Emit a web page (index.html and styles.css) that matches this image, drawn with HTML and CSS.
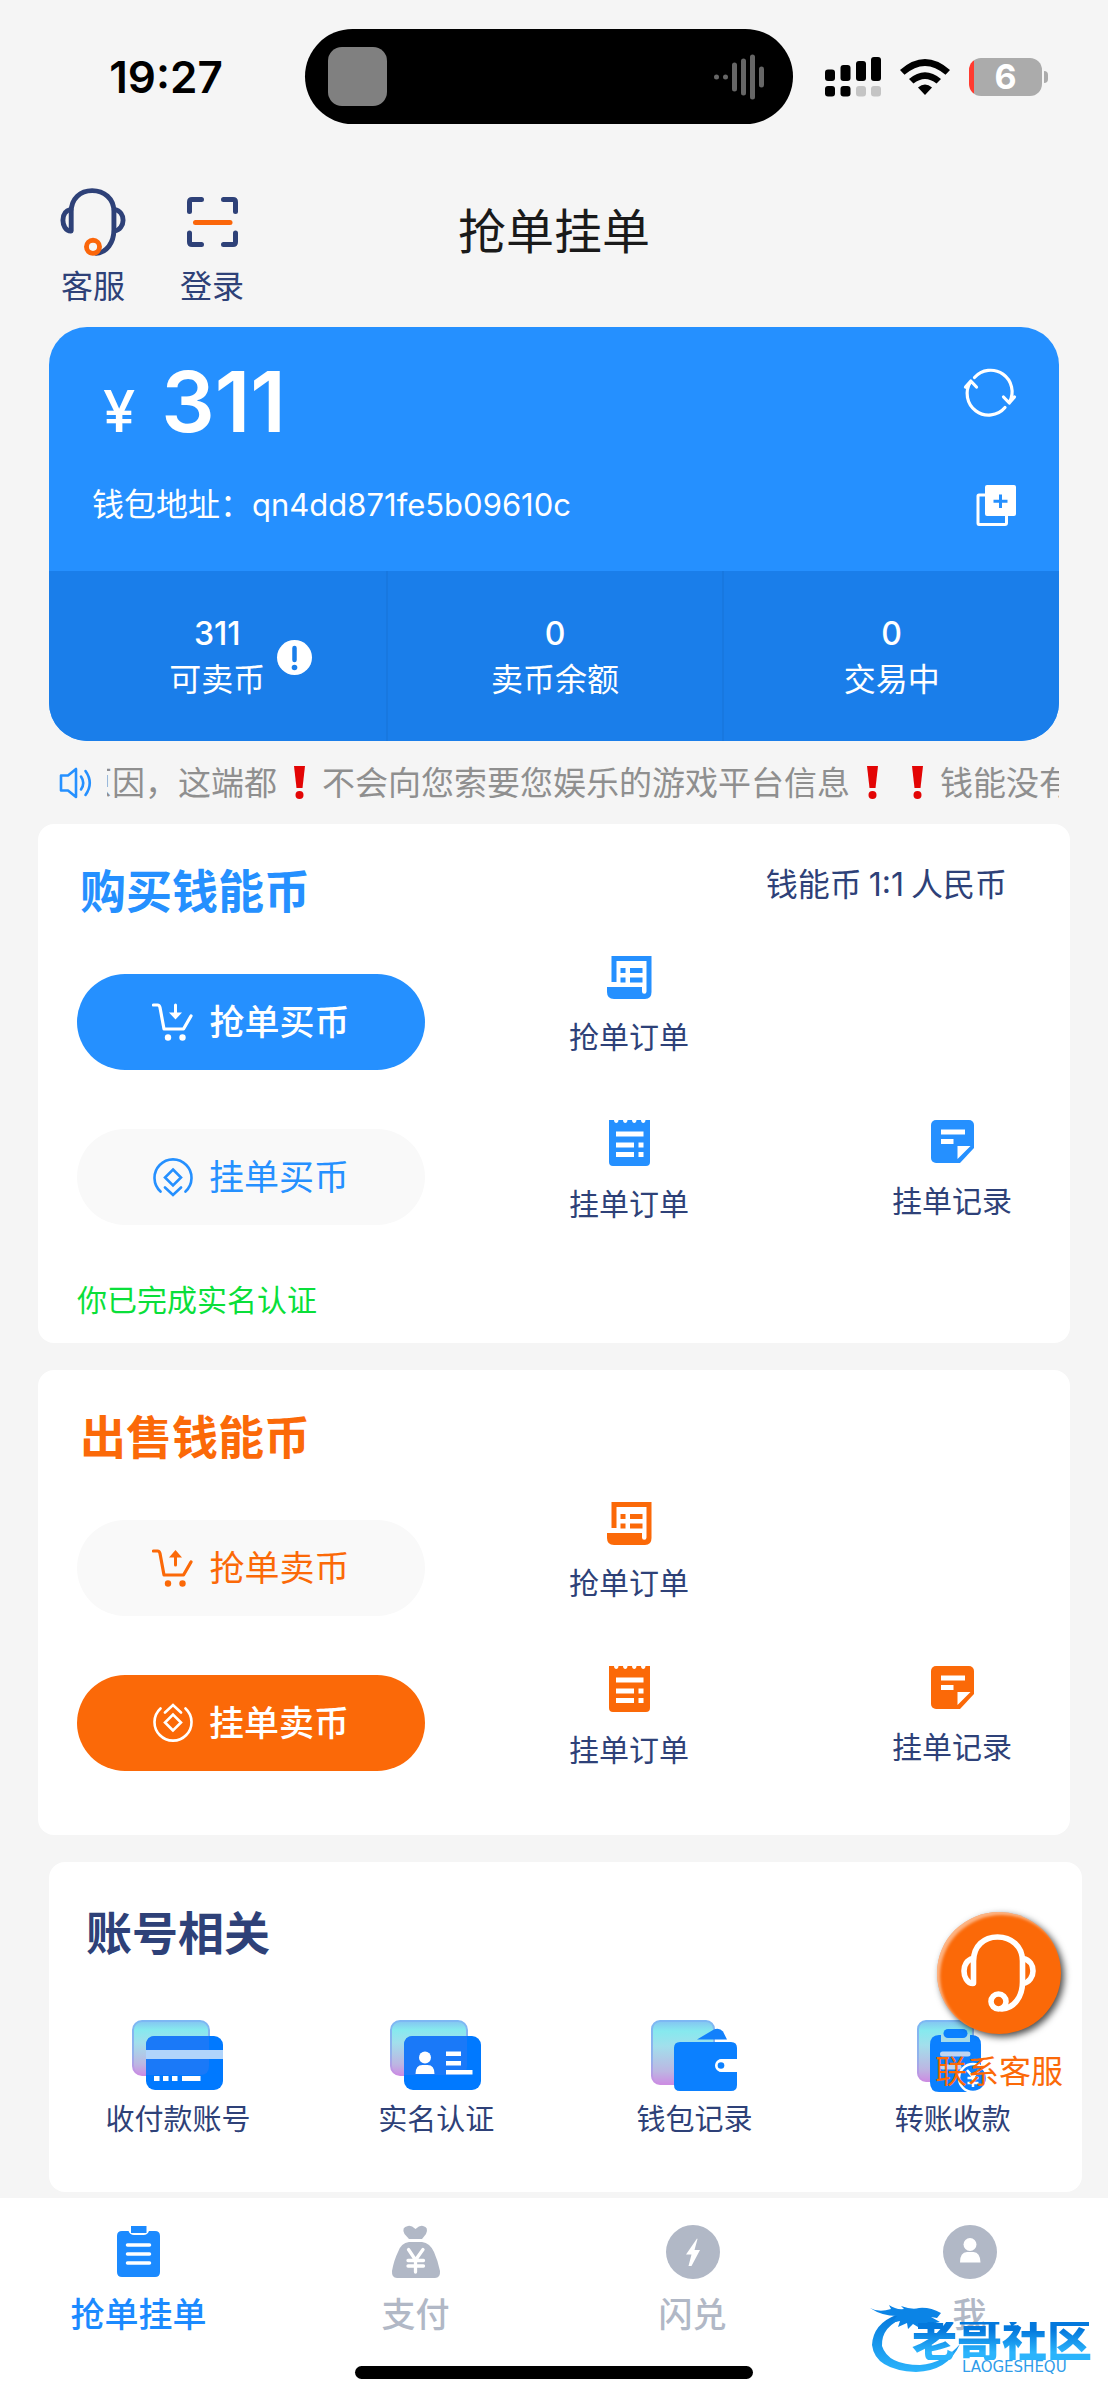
FILE: index.html
```html
<!DOCTYPE html>
<html lang="zh-CN">
<head>
<meta charset="utf-8">
<meta name="viewport" content="width=device-width, initial-scale=1">
<title>抢单挂单</title>
<link rel="stylesheet" href="styles.css">
</head>
<body>
<svg class="sprite" aria-hidden="true">
  <defs>
    <linearGradient id="glass" x1="0" y1="0" x2="0" y2="1">
      <stop offset="0" stop-color="#84c4f2"/>
      <stop offset=".16" stop-color="#86e9ee"/>
      <stop offset=".4" stop-color="#a2dfec"/>
      <stop offset=".8" stop-color="#bcb6e2"/>
      <stop offset="1" stop-color="#cc8ee2"/>
    </linearGradient>
    <linearGradient id="edge" x1="0" y1="0" x2="0" y2="1">
      <stop offset="0" stop-color="#7db8f3"/>
      <stop offset=".6" stop-color="#92b2ec"/>
      <stop offset="1" stop-color="#cc8ee2"/>
    </linearGradient>
    <linearGradient id="dragon" x1="0" y1="0" x2="0" y2="1">
      <stop offset="0" stop-color="#0478dc"/>
      <stop offset="1" stop-color="#2bb4fc"/>
    </linearGradient>
  </defs>
  <symbol id="i-headset" viewBox="0 0 75 78">
    <g fill="none" stroke="currentColor" stroke-width="5.6" stroke-linecap="round">
      <path d="M12.5 49V27C12.5 12 23 3 36.500 3S61.500 12 61.500 27V48C61.500 63 53 74 41 75"/>
      <path d="M12 24.500C5.500 26 3 31.500 3 37S6 49.500 12 49.500"/>
      <path d="M62 24.500c7 1.500 10 7 10 12.500s-3.500 11.500-10 12.500"/>
      <circle class="mic" cx="37.500" cy="67.500" r="7.500"/>
    </g>
  </symbol>
  <symbol id="i-order" viewBox="0 0 45 43">
    <path d="M4.500 0H44.500V36Q44.500 43 38 43H7Q0 43 0 36V31H35V35.500a2.200 2.200 0 0 0 4.500 0V5H9.500V26H4.500ZM13.500 12h5v5h-5zM23 12h12.500v5H23zM13.500 21.500h5v5h-5zM23 21.500h12.500v5H23z" fill="currentColor"/>
  </symbol>
  <symbol id="i-receipt" viewBox="0 0 41 46">
    <path d="M0 0H5C5 4 9.500 4 9.500 0H14C14 4 18.500 4 18.500 0H23C23 4 27.500 4 27.500 0H32C32 4 36.500 4 36.500 0H41V42q0 4-4 4H4q-4 0-4-4Z" fill="currentColor"/>
    <path d="M7 11.500h27.500v5H7zM7 22.500h18v5H7zM29.500 22.500h5v5h-5zM7 32h18v5H7zM29.500 32h5v5h-5z" fill="#fff"/>
  </symbol>
  <symbol id="i-note" viewBox="0 0 43 43">
    <path d="M5 0H38a5 5 0 0 1 5 5V28L29 43H5a5 5 0 0 1-5-5V5a5 5 0 0 1 5-5Z" fill="currentColor"/>
    <path d="M10 9.500h24v5H10zM10 19h12.500v5H10zM26.500 26H39.500L26.500 39z" fill="#fff"/>
  </symbol>
  <symbol id="i-cart" viewBox="0 0 41 38">
    <path d="M1.500 2H5.500Q7.500 2 8 4.500L12 26H31.500L39 13" fill="none" stroke="currentColor" stroke-width="3.200" stroke-linecap="round" stroke-linejoin="round"/>
    <circle cx="16" cy="34.500" r="3.200" fill="currentColor"/><circle cx="30.500" cy="34.500" r="3.200" fill="currentColor"/>
  </symbol>
  <symbol id="i-coin" viewBox="0 0 40 40">
    <g fill="none" stroke="currentColor" stroke-width="2.600" stroke-linecap="round">
      <path d="M7.500 34.500A18.500 18.500 0 1 1 32.500 34.500M12 30.500L20 38L28 30.500"/>
      <path d="M20 12.500L28 20.500L20 28.500L12 20.500Z"/>
    </g>
  </symbol>
</svg>

<div class="status">
  <span class="status-time">19:27</span>
  <div class="island">
    <span class="island-art"></span>
    <svg width="54" height="46" viewBox="0 0 54 46" stroke="#666" stroke-width="5" stroke-linecap="round"><path d="M2.500 23v.1M11.500 23v.1M20.500 11v24M29.500 7v32M38.500 3v40M47.500 15v16"/></svg>
  </div>
  <div class="status-icons">
    <svg width="56" height="40" viewBox="0 0 56 40"><g fill="#000"><rect y="12.500" width="10" height="11.500" rx="3"/><rect x="15.500" y="8" width="10" height="16" rx="3"/><rect x="31" y="4" width="10" height="20" rx="3"/><rect x="46" width="10" height="24" rx="3"/><rect y="29" width="10" height="10.500" rx="3"/><rect x="15.500" y="29" width="10" height="10.500" rx="3"/></g><g fill="#c4c4c4"><rect x="31" y="29" width="10" height="10.500" rx="3"/><rect x="46" y="29" width="10" height="10.500" rx="3"/></g></svg>
    <svg width="50" height="36" viewBox="0 0 50 36"><path d="M25 36L18 28.500Q25 22.500 32 28.500Z"/><path d="M9 20Q25 6.500 41 20L36.500 24.500Q25 15.500 13.500 24.500Z"/><path d="M0 11Q25-11 50 11L45.500 15.800Q25-2 4.500 15.800Z"/></svg>
    <span class="battery"><span class="battery-num">6</span></span>
  </div>
</div>

<header class="header">
  <nav class="tools">
    <a href="#service" class="tool"><svg class="headset-duo" width="66" height="68"><use href="#i-headset"/></svg>客服</a>
    <a href="#scan" class="tool"><span class="tool-pic"><svg width="51" height="50" viewBox="0 0 51 50" fill="none" stroke-width="5" stroke-linecap="round"><path stroke="currentColor" d="M2.500 14.500V5Q2.500 2.500 5 2.500H14.500M36.500 2.500H46Q48.500 2.500 48.500 5V14.500M48.500 36V45Q48.500 47.500 46 47.500H36.500M14.500 47.500H5Q2.500 47.500 2.500 45V36"/><path stroke="#fb660a" d="M8.500 25.500H43"/></svg></span>登录</a>
  </nav>
  <h1 class="title">抢单挂单</h1>
</header>

<main>
  <section class="wallet">
    <div class="wallet-top">
      <div class="wallet-line">
        <p class="amount"><span class="yen">¥</span>311</p>
        <button class="icon-btn" aria-label="刷新"><svg width="52" height="46" viewBox="0 0 52 46" fill="none" stroke="#fff" stroke-width="3.200" stroke-linecap="round" stroke-linejoin="round"><path d="M6.500 12A21.500 21.500 0 0 0 41 37.500M1.500 17L6.800 11L12.500 17M10.500 7.500A21.500 21.500 0 0 1 45.500 32M39.500 27L45.300 33L50.500 27"/></svg></button>
      </div>
      <div class="wallet-line">
        <p class="address">钱包地址：<span>qn4dd871fe5b09610c</span></p>
        <button class="icon-btn" aria-label="复制"><svg width="40" height="41" viewBox="0 0 40 41"><path d="M9 10H3Q2 10 2 11V38Q2 39.500 3 39.500H29Q30.500 39.500 30.500 38V31" fill="none" stroke="#fff" stroke-width="3"/><rect x="9" width="31" height="31" rx="2" fill="#fff"/><path d="M24.500 9.500V23M17.500 16.200H31.500" stroke="#2590ff" stroke-width="3"/></svg></button>
      </div>
    </div>
    <div class="stats">
      <div class="stat"><p><b>311</b>可卖币</p><svg width="35" height="35" viewBox="0 0 35 35"><circle cx="17.500" cy="17.500" r="17.500" fill="#fff"/><path d="M17.500 8V20" stroke="#1a7eea" stroke-width="4.500" stroke-linecap="round"/><circle cx="17.500" cy="27.500" r="2.800" fill="#1a7eea"/></svg></div>
      <div class="stat"><p><b>0</b>卖币余额</p></div>
      <div class="stat"><p><b>0</b>交易中</p></div>
    </div>
  </section>

  <div class="notice">
    <svg width="34" height="32" viewBox="0 0 34 32" fill="none" stroke="#2590ff" stroke-width="2.600" stroke-linejoin="round" stroke-linecap="round"><path d="M2 8.500H9L17 2V30L9 23.500H2ZM22 9.500Q26.500 16 22 22.500M26.500 4Q35 16 26.500 28"/></svg>
    <div class="marquee"><div class="marquee-track">原因，这端都<svg class="bang" viewBox="0 0 45 33"><path d="M17 0H28L25.500 22H19.500Z"/><circle cx="22.500" cy="29" r="4"/></svg>不会向您索要您娱乐的游戏平台信息<svg class="bang" viewBox="0 0 45 33"><path d="M17 0H28L25.500 22H19.500Z"/><circle cx="22.500" cy="29" r="4"/></svg><svg class="bang" viewBox="0 0 45 33"><path d="M17 0H28L25.500 22H19.500Z"/><circle cx="22.500" cy="29" r="4"/></svg>钱能没有</div></div>
  </div>

  <section class="card trade buy">
    <div class="card-head"><h2>购买钱能币</h2><span class="rate">钱能币<span>1:1</span>人民币</span></div>
    <div class="trade-body">
      <div class="pills">
        <button class="pill solid"><svg width="41" height="38" viewBox="0 0 41 38"><use href="#i-cart"/><path d="M23.500 2V10" stroke="currentColor" stroke-width="3" stroke-linecap="round"/><path d="M17 9.500H30L23.500 16.500Z" fill="currentColor"/></svg>抢单买币</button>
        <button class="pill"><svg width="40" height="40"><use href="#i-coin"/></svg>挂单买币</button>
      </div>
      <div class="links">
        <a href="#buy-orders" class="link"><svg width="45" height="43"><use href="#i-order"/></svg>抢单订单</a>
        <span></span>
        <a href="#buy-listings" class="link"><svg width="41" height="46"><use href="#i-receipt"/></svg>挂单订单</a>
        <a href="#buy-records" class="link"><svg width="43" height="43"><use href="#i-note"/></svg>挂单记录</a>
      </div>
    </div>
    <p class="verified">你已完成实名认证</p>
  </section>

  <section class="card trade sell">
    <div class="card-head"><h2>出售钱能币</h2></div>
    <div class="trade-body">
      <div class="pills">
        <button class="pill"><svg width="41" height="38" viewBox="0 0 41 38"><use href="#i-cart"/><path d="M23.500 8V16" stroke="currentColor" stroke-width="3" stroke-linecap="round"/><path d="M17 8.500H30L23.500 1Z" fill="currentColor"/></svg>抢单卖币</button>
        <button class="pill solid"><svg class="flip" width="40" height="40"><use href="#i-coin"/></svg>挂单卖币</button>
      </div>
      <div class="links">
        <a href="#sell-orders" class="link"><svg width="45" height="43"><use href="#i-order"/></svg>抢单订单</a>
        <span></span>
        <a href="#sell-listings" class="link"><svg width="41" height="46"><use href="#i-receipt"/></svg>挂单订单</a>
        <a href="#sell-records" class="link"><svg width="43" height="43"><use href="#i-note"/></svg>挂单记录</a>
      </div>
    </div>
  </section>

  <section class="card account">
    <h2>账号相关</h2>
    <nav class="account-grid">
      <a href="#payee"><svg width="92" height="72" viewBox="0 0 92 72"><rect x="1" y="1" width="76" height="54" rx="9" fill="url(#glass)" stroke="url(#edge)" stroke-width="2"/><rect x="14" y="16" width="77" height="54" rx="9" fill="#0079ff"/><path d="M14 25Q14 16 23 16H77V46Q77 55 68 55H14Z" fill="#1a79f8"/><path d="M14 30H91v9H14z" fill="#b0d4fb"/><path d="M22 56h5.500v5H22zM31 56h5.500v5H31zM40 56h5.500v5H40zM50 56h18.500v5H50z" fill="#fff"/></svg>收付款账号</a>
      <a href="#identity"><svg width="92" height="72" viewBox="0 0 92 72"><rect x="1" y="1" width="76" height="54" rx="9" fill="url(#glass)" stroke="url(#edge)" stroke-width="2"/><rect x="14" y="16" width="77" height="54" rx="9" fill="#0079ff"/><path d="M14 25Q14 16 23 16H77V46Q77 55 68 55H14Z" fill="#1a79f8"/><circle cx="35" cy="37.500" r="6" fill="#fff"/><path d="M25.500 54q0-9 7-9h5q7 0 7 9zM56 31.500h15v4.500H56zM56 41h15v4.500H56zM56 50h26.500v4.500H56z" fill="#fff"/></svg>实名认证</a>
      <a href="#wallet-log"><svg width="87" height="72" viewBox="0 0 87 72"><rect x="1" y="1" width="62" height="63" rx="8" fill="url(#glass)" stroke="url(#edge)" stroke-width="2"/><path d="M46 19.500L62 10Q68 7 72 11.500L76 19.500Z" fill="#1280fb"/><path d="M29 22H80Q86 22 86 28V39H71a6.300 6.300 0 0 0 0 13H86V65Q86 71 80 71H29Q23 71 23 65V28Q23 22 29 22Z" fill="#0b80ff"/><path d="M86 39H70.500a6.500 6.500 0 0 0 0 13H86z" fill="#fff"/><circle cx="70" cy="45.500" r="3.300" fill="#0b80ff"/></svg>钱包记录</a>
      <a href="#transfer"><svg width="71" height="72" viewBox="0 0 71 72"><rect x="1" y="1" width="55" height="60" rx="8" fill="url(#glass)" stroke="url(#edge)" stroke-width="2"/><path d="M13 25Q13 15 22 15H55Q64 15 64 25V62Q64 72 55 72H22Q13 72 13 62Z" fill="#0b80ff"/><path d="M24 14H53V22H24z" fill="#a6dcea"/><rect x="26.500" y="9" width="24" height="9" rx="4.500" fill="#0b80ff"/><path d="M25.500 34H51M25.500 47H42" stroke="#bfd5f2" stroke-width="5" stroke-linecap="round"/><circle cx="56" cy="58" r="14" fill="#0b80ff" stroke="#fff" stroke-width="2.500"/><path d="M50 50L56 57L62 50M56 57V67M50.500 58H61.500M50.500 63H61.500" fill="none" stroke="#fff" stroke-width="2.500"/></svg>转账收款</a>
    </nav>
  </section>
</main>

<footer class="dock">
  <nav class="tabs">
    <a href="#orders" class="tab active"><svg width="44" height="54" viewBox="0 0 44 54"><path d="M5 6H11.500Q13 10 17 10H26.500Q30.500 10 32 6H38Q43 6 43 11V47Q43 52 38 52H5Q0 52 0 47V11Q0 6 5 6Z" fill="currentColor"/><path d="M14 1H29.500V8H14z" fill="currentColor"/><path d="M10.500 20H32.500M10.500 29H32.500M10.500 38H32.500" stroke="#fff" stroke-width="3.500" stroke-linecap="round"/></svg>抢单挂单</a>
    <a href="#pay" class="tab"><svg width="48" height="54" viewBox="0 0 48 54"><path d="M16 1Q19 0 23.500 4Q28 0 31 1Q37 2 34 9L30 14H17L12.500 9Q9 2 16 1ZM17 17H30Q38 18 42 27Q46 36 48 46Q48.500 53 43 53H5Q-.5 53 0 46Q2 35 6 27Q9 18 17 17Z" fill="currentColor"/><path d="M16.500 24.500L23.500 35L31 24.500M23.500 35V47M16 35.500H31.500M16 41H31.500" fill="none" stroke="#fff" stroke-width="3.300" stroke-linecap="round"/></svg>支付</a>
    <a href="#swap" class="tab"><svg width="54" height="54" viewBox="0 0 54 54"><circle cx="27" cy="27" r="27" fill="currentColor"/><path d="M31 13.500L20 29.500H25.500L22.500 41H25.500L34 25H28.500L31.500 14Z" fill="#fff"/></svg>闪兑</a>
    <a href="#me" class="tab"><svg width="54" height="54" viewBox="0 0 54 54"><circle cx="27" cy="27" r="27" fill="currentColor"/><circle cx="27" cy="19.500" r="6.500" fill="#fff"/><path d="M17 37.500Q17 27 24 27H30.500Q37 27 37.500 37.500Z" fill="#fff"/></svg>我</a>
  </nav>
  <div class="home-bar"></div>
  <div class="brand">
    <svg width="92" height="76" viewBox="0 0 92 76"><path d="M26 17Q3 26 2 47Q5 72 46 74Q78 73 90 46Q74 65 50 67Q18 67 12 48Q11 28 36 19Z" fill="url(#dragon)"/><path d="M0 10Q9 15 21 11L19 7Q26 12 34 11L31 8Q42 12 49 10Q60 9 71 15L67 20L61 19L70 24Q63 26 57 25L48 29L43 26L38 31L37 25L28 29L30 23L21 25L27 18Q12 18 0 10Z" fill="#0b84e6"/></svg>
    <div class="brand-text"><strong>老哥社区</strong><small>LAOGESHEQU</small></div>
  </div>
</footer>

<a href="#service" class="float"><span class="float-disc"><svg width="75" height="78"><use href="#i-headset"/></svg></span>联系客服</a>
</body>
</html>
```
FILE: styles.css
```css
* { box-sizing: border-box; }
body, h1, h2, p { margin: 0; }
body {
  position: relative;
  background: #f5f5f5;
  color: #2e4178;
  font-family: Inter, "Noto Sans CJK SC", sans-serif;
  font-size: 30px;
  line-height: 40px;
}
a { color: inherit; text-decoration: none; }
button { border: 0; padding: 0; background: none; color: inherit; font: inherit; cursor: pointer; }
svg { display: block; flex: none; overflow: visible; }
.sprite { position: absolute; width: 0; height: 0; overflow: hidden; }

/* status bar */
.status {
  display: grid;
  grid-template-columns: 1fr 488px 1fr;
  align-items: center;
  padding: 29px 15px 28px 5px;
  color: #000;
}
.status-time { padding-left: 22px; text-align: center; font-size: 44px; font-weight: 600; line-height: 40px; }
.island {
  display: flex;
  align-items: center;
  justify-content: space-between;
  height: 95px;
  padding: 0 25px 0 23px;
  border-radius: 48px;
  background: #000;
}
.island-art { width: 59px; height: 59px; border-radius: 14px; background: #808080; }
.status-icons { display: flex; align-items: center; justify-content: flex-end; gap: 19px; padding-right: 51px; }
.battery {
  position: relative;
  width: 73px;
  height: 38px;
  border-radius: 12px;
  background: linear-gradient(90deg, #ff3b30 5px, #ababab 5px);
  color: #fff;
  text-align: center;
}
.battery::after {
  content: "";
  position: absolute;
  left: 75px;
  top: 13px;
  width: 4px;
  height: 12px;
  border-radius: 0 4px 4px 0;
  background: #ababab;
}
.battery-num { font-size: 34px; font-weight: 700; line-height: 38px; }

/* header */
.header {
  display: grid;
  grid-template-columns: 1fr auto 1fr;
  align-items: start;
  padding: 36px 49px 20px;
}
.tools { display: flex; gap: 54px; padding-left: 11px; }
.tool { display: flex; flex-direction: column; align-items: center; gap: 11px; font-size: 32px; }
.tool-pic { display: flex; align-items: center; height: 68px; }
.mic { stroke: var(--mic, currentColor); }
.headset-duo { --mic: #fb660a; }
.title { padding-top: 12px; color: #1a1a1a; font-size: 48px; font-weight: 400; line-height: 64px; }

/* wallet */
.wallet { margin: 0 49px; overflow: hidden; border-radius: 38px; background: #2590ff; color: #fff; }
.wallet-top { display: flex; flex-direction: column; gap: 51px; padding: 43px 43px 45px; }
.wallet-line { display: flex; align-items: flex-start; justify-content: space-between; }
.amount { display: flex; align-items: baseline; gap: 26px; padding-left: 11px; font-size: 84px; font-weight: 600; line-height: 64px; }
.yen { font-size: 58px; font-weight: 500; line-height: 40px; }
.address { font-size: 32px; }
.address span { font-size: 31px; }
.stats { display: grid; grid-template-columns: repeat(3, 1fr); background: #1a7eea; }
.stat {
  display: grid;
  grid-template-columns: 1fr auto 1fr;
  align-items: center;
  column-gap: 12px;
  height: 170px;
  padding-top: 2px;
  font-size: 32px;
  line-height: 46px;
  text-align: center;
}
.stat p { grid-column: 2; }
.stat + .stat { border-left: 2px solid #1878e0; }
.stat b { display: block; font-weight: 500; }

/* notice */
.notice { display: flex; align-items: center; gap: 14px; height: 83px; padding: 0 49px 0 59px; color: #8f8f8f; font-size: 33px; }
.marquee { flex: 1; overflow: hidden; }
.marquee-track { display: flex; align-items: center; margin-left: -28px; white-space: nowrap; }
.bang { width: 45px; height: 33px; fill: #e30505; }

/* cards */
.card { border-radius: 16px; background: #fff; }
.card h2 { font-size: 46px; font-weight: 700; line-height: 60px; }
.trade { margin: 0 38px 27px; padding: 37px 39px 64px; }
.card-head { display: flex; align-items: flex-start; justify-content: space-between; padding: 0 24px 0 3px; }
.rate { display: flex; gap: 7px; font-size: 32px; line-height: 48px; }
.buy { --accent: #2590ff; padding-bottom: 23px; }
.sell { --accent: #fb6908; }
.trade h2 { color: var(--accent); }
.trade-body { display: grid; grid-template-columns: 348px 1fr; gap: 144px; padding: 35px 19px 0 0; }
.pills { display: flex; flex-direction: column; gap: 59px; padding-top: 18px; }
.pill {
  display: flex;
  align-items: center;
  justify-content: center;
  gap: 16px;
  height: 96px;
  border-radius: 48px;
  background: #f9f9f9;
  color: var(--accent);
  font-size: 35px;
}
.solid { background: var(--accent); color: #fff; font-weight: 500; }
.flip { transform: rotate(180deg); }
.links { display: grid; grid-template-columns: auto auto; justify-content: space-between; align-content: start; row-gap: 63px; }
.link { display: flex; flex-direction: column; align-items: center; gap: 18px; color: #2e4178; }
.link svg { color: var(--accent); }
.verified { margin-top: 55px; color: #0adf3a; }

.account { margin: 0 26px 6px 49px; padding: 41px 0 52px; }
.account h2 { padding-left: 37px; }
.account-grid { display: grid; grid-template-columns: repeat(4, 1fr); padding-top: 57px; }
.account-grid a { display: flex; flex-direction: column; align-items: center; gap: 8px; font-size: 29px; }

/* bottom bar */
.dock { position: relative; padding: 27px 0 21px; background: #fff; }
.tabs { display: grid; grid-template-columns: repeat(4, 1fr); }
.tab { display: flex; flex-direction: column; align-items: center; gap: 16px; color: #b1b8c6; font-size: 34px; font-weight: 500; }
.active { color: #1b8aff; }
.home-bar { width: 36%; height: 13px; margin: 31px auto 0; border-radius: 7px; background: #000; }
.brand { position: absolute; right: 16px; bottom: 26px; display: flex; }
.brand-text { display: flex; flex-direction: column; margin: 24px 0 0 -50px; }
.brand strong {
  background: linear-gradient(#0478dc 20%, #2bb4fc 80%);
  background-clip: text;
  color: transparent;
  font-size: 45px;
  font-weight: 900;
  line-height: 38px;
}
.brand small { padding-left: 50px; color: #2f9cea; font-family: "DejaVu Sans", sans-serif; font-size: 15px; line-height: 14px; }

/* floating support link */
.float {
  position: absolute;
  right: 45px;
  bottom: 308px;
  display: flex;
  flex-direction: column;
  align-items: center;
  gap: 18px;
  color: #fb6908;
  font-size: 32px;
}
.float-disc {
  display: flex;
  align-items: center;
  justify-content: center;
  width: 124px;
  height: 122px;
  border-radius: 50%;
  background: #fb6908;
  box-shadow: 3px 3px 7px rgba(0, 0, 0, .7), inset 3px 3px 3px rgba(255, 255, 255, .5);
  color: #fff;
}
```
